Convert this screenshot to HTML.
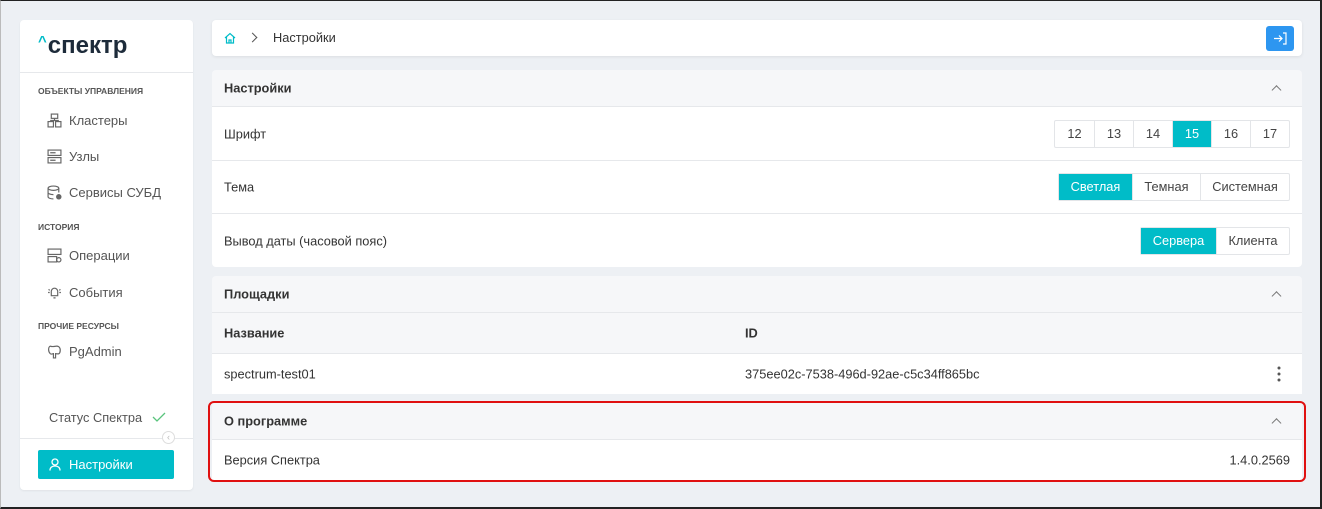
<!DOCTYPE html>
<html><head><meta charset="utf-8"><style>
*{box-sizing:border-box;margin:0;padding:0}
body{width:1322px;height:509px;background:#edf0f4;font-family:"Liberation Sans",sans-serif;font-size:12.8px;color:#333;position:relative;overflow:hidden}
.frame{position:absolute;left:0;top:0;width:1322px;height:509px;border-top:1px solid #222;border-right:2px solid #222;border-bottom:2px solid #222;border-left:1px solid #bbb;pointer-events:none}
.abs{position:absolute}
.card{position:absolute;background:#fff;border-radius:4px}
.sb{left:20px;top:20px;width:173px;height:470px;box-shadow:0 1px 2px rgba(0,0,0,.06)}
.logo{position:absolute;left:38px;top:32px;font-size:24px;font-weight:bold;color:#1d2b3a}
.logo span{color:#00bcc8;font-size:15px;vertical-align:top;position:relative;top:1px;margin-right:1px}
.sec{position:absolute;left:38px;font-size:8.5px;font-weight:bold;color:#555}
.it{position:absolute;left:47px;color:#555;font-size:13px}
.it i{position:absolute;left:0;top:0;width:15px;height:15px}
.it b{font-weight:normal;margin-left:22px}
.row{position:absolute;left:212px;width:1090px;border-bottom:1px solid #e6e8eb;background:#fff}
.hd{background:#f6f7f9;font-weight:bold;color:#333}
.lbl{position:absolute;left:12px;top:50%;transform:translateY(-50%)}
.chev{position:absolute;right:22px;top:50%;width:7px;height:7px;border-left:1.5px solid #777;border-top:1.5px solid #777;transform:translateY(-20%) rotate(45deg)}
.seg{position:absolute;display:flex;border:1px solid #e3e5e8;border-radius:2px;top:50%;transform:translateY(-50%)}
.seg div{height:26px;line-height:26px;text-align:center;border-left:1px solid #e3e5e8;color:#444}
.seg div:first-child{border-left:none}
.seg .on{background:#00bcc8;color:#fff}
</style></head><body>
<div class="card sb"></div>
<div class="logo"><span>^</span>спектр</div>
<div class="abs" style="left:20px;top:72px;width:173px;height:1px;background:#e6e8eb"></div>
<div class="sec" style="top:86px">ОБЪЕКТЫ УПРАВЛЕНИЯ</div>
<div class="it" style="top:113px"><i><svg width="15" height="15" viewBox="0 0 14 14" fill="none" stroke="#666" stroke-width="1.1"><rect x="4" y="1" width="6" height="4"/><rect x="1" y="8" width="5" height="5"/><rect x="8" y="8" width="5" height="5"/><path d="M7 5v2M3.5 8V7h7v1"/></svg></i><b>Кластеры</b></div>
<div class="it" style="top:149px"><i><svg width="15" height="15" viewBox="0 0 14 14" fill="none" stroke="#666" stroke-width="1.1"><rect x="1" y="1" width="12" height="5"/><rect x="1" y="8" width="12" height="5"/><path d="M3 3.5h5M3 10.5h5"/></svg></i><b>Узлы</b></div>
<div class="it" style="top:185px"><i><svg width="15" height="15" viewBox="0 0 14 14" fill="none" stroke="#666" stroke-width="1.1"><ellipse cx="6" cy="3" rx="5" ry="2"/><path d="M1 3v8c0 1 2 2 5 2M11 3v4M1 7c0 1 2 2 5 2"/><circle cx="11" cy="11" r="2" fill="#666"/></svg></i><b>Сервисы СУБД</b></div>
<div class="sec" style="top:222px">ИСТОРИЯ</div>
<div class="it" style="top:248px"><i><svg width="15" height="15" viewBox="0 0 14 14" fill="none" stroke="#666" stroke-width="1.1"><rect x="1" y="1" width="12" height="5"/><rect x="1" y="8" width="8" height="5"/><circle cx="11" cy="11" r="2"/></svg></i><b>Операции</b></div>
<div class="it" style="top:285px"><i><svg width="15" height="15" viewBox="0 0 14 14" fill="none" stroke="#666" stroke-width="1.1"><path d="M4 10V6a3 3 0 0 1 6 0v4H3.5h7M6 12h2M1.5 4l1 1M12.5 4l-1 1M1 7h1.5M13 7h-1.5"/></svg></i><b>События</b></div>
<div class="sec" style="top:321px">ПРОЧИЕ РЕСУРСЫ</div>
<div class="it" style="top:344px"><i><svg width="15" height="15" viewBox="0 0 14 14" fill="none" stroke="#666" stroke-width="1.1"><path d="M3 2c-2 1-2 5 0 7 1 1 2 0 3 0v4h2V9c2 0 3 1 4-1 1-3 0-6-3-6-2 0-3 1-6 0z"/></svg></i><b>PgAdmin</b></div>
<div class="abs" style="left:49px;top:410px;color:#555">Статус Спектра <svg width="14" height="10" viewBox="0 0 14 10" style="margin-left:6px"><path d="M1 5l4 4 8-8" fill="none" stroke="#5ac47d" stroke-width="1.3"/></svg></div>
<div class="abs" style="left:20px;top:438px;width:173px;height:1px;background:#e6e8eb"></div>
<div class="abs" style="left:162px;top:431px;width:13px;height:13px;border:1px solid #ddd;border-radius:50%;background:#fff;font-size:9px;color:#bbb;text-align:center;line-height:11px">‹</div>
<div class="abs" style="left:38px;top:450px;width:136px;height:29px;background:#00bcc8;border-radius:2px;color:#fff;font-size:13px;line-height:29px;padding-left:31px">Настройки
<svg class="abs" style="left:11px;top:8px" width="12" height="13" viewBox="0 0 12 13" fill="none" stroke="#fff" stroke-width="1.3"><circle cx="6" cy="4" r="3"/><path d="M1 12.5c0-3 2-4.5 5-4.5s5 1.5 5 4.5"/></svg></div>

<div class="card" style="left:212px;top:20px;width:1090px;height:36px;box-shadow:0 1px 3px rgba(0,0,0,.08)"></div>
<svg class="abs" style="left:224px;top:32px" width="12" height="12" viewBox="0 0 12 12" fill="none" stroke="#00bcc8" stroke-width="1.2"><path d="M1 6L6 1.5 11 6M2.5 5v6h7V5M5 11V8h2v3"/></svg>
<div class="abs" style="left:249px;top:34px;width:7px;height:7px;border-right:1.5px solid #555;border-top:1.5px solid #555;transform:rotate(45deg)"></div>
<div class="abs" style="left:273px;top:30px;color:#333">Настройки</div>
<div class="abs" style="left:1266px;top:26px;width:28px;height:25px;background:#2d96f0;border-radius:3px"><svg style="position:absolute;left:7px;top:6px" width="14" height="13" viewBox="0 0 14 13" fill="none" stroke="#fff" stroke-width="1.2"><path d="M1 6.5h8M6 3.5l3 3-3 3M10 1h3v11h-3"/></svg></div>

<div class="row hd" style="top:70px;height:37px;border-radius:4px 4px 0 0"><span class="lbl">Настройки</span><i class="chev"></i></div>
<div class="row" style="top:107px;height:54px"><span class="lbl">Шрифт</span>
<div class="seg" style="right:12px"><div style="width:39px">12</div><div style="width:39px">13</div><div style="width:39px">14</div><div class="on" style="width:39px">15</div><div style="width:39px">16</div><div style="width:39px">17</div></div></div>
<div class="row" style="top:161px;height:53px"><span class="lbl">Тема</span>
<div class="seg" style="right:12px"><div class="on" style="width:73px">Светлая</div><div style="width:68px">Темная</div><div style="width:89px">Системная</div></div></div>
<div class="row" style="top:214px;height:53px;border-bottom:none;border-radius:0 0 4px 4px"><span class="lbl">Вывод даты (часовой пояс)</span>
<div class="seg" style="right:12px"><div class="on" style="width:75px">Сервера</div><div style="width:73px">Клиента</div></div></div>

<div class="row hd" style="top:276px;height:37px;border-radius:4px 4px 0 0"><span class="lbl">Площадки</span><i class="chev"></i></div>
<div class="row hd" style="top:313px;height:41px"><span class="lbl">Название</span><span class="lbl" style="left:533px">ID</span></div>
<div class="row" style="top:354px;height:40px;border-bottom:none"><span class="lbl">spectrum-test01</span><span class="lbl" style="left:533px">375ee02c-7538-496d-92ae-c5c34ff865bc</span>
<svg class="abs" style="right:21px;top:12px" width="4" height="16"><circle cx="2" cy="2" r="1.5" fill="#555"/><circle cx="2" cy="8" r="1.5" fill="#555"/><circle cx="2" cy="14" r="1.5" fill="#555"/></svg></div>

<div class="row hd" style="top:403px;height:37px"><span class="lbl">О программе</span><i class="chev"></i></div>
<div class="row" style="top:440px;height:40px;border-bottom:none"><span class="lbl">Версия Спектра</span><span class="lbl" style="left:auto;right:12px">1.4.0.2569</span></div>
<div class="abs" style="left:208px;top:401px;width:1098px;height:81px;border:2px solid #e01010;border-radius:6px"></div>
<div class="frame"></div>
</body></html>
